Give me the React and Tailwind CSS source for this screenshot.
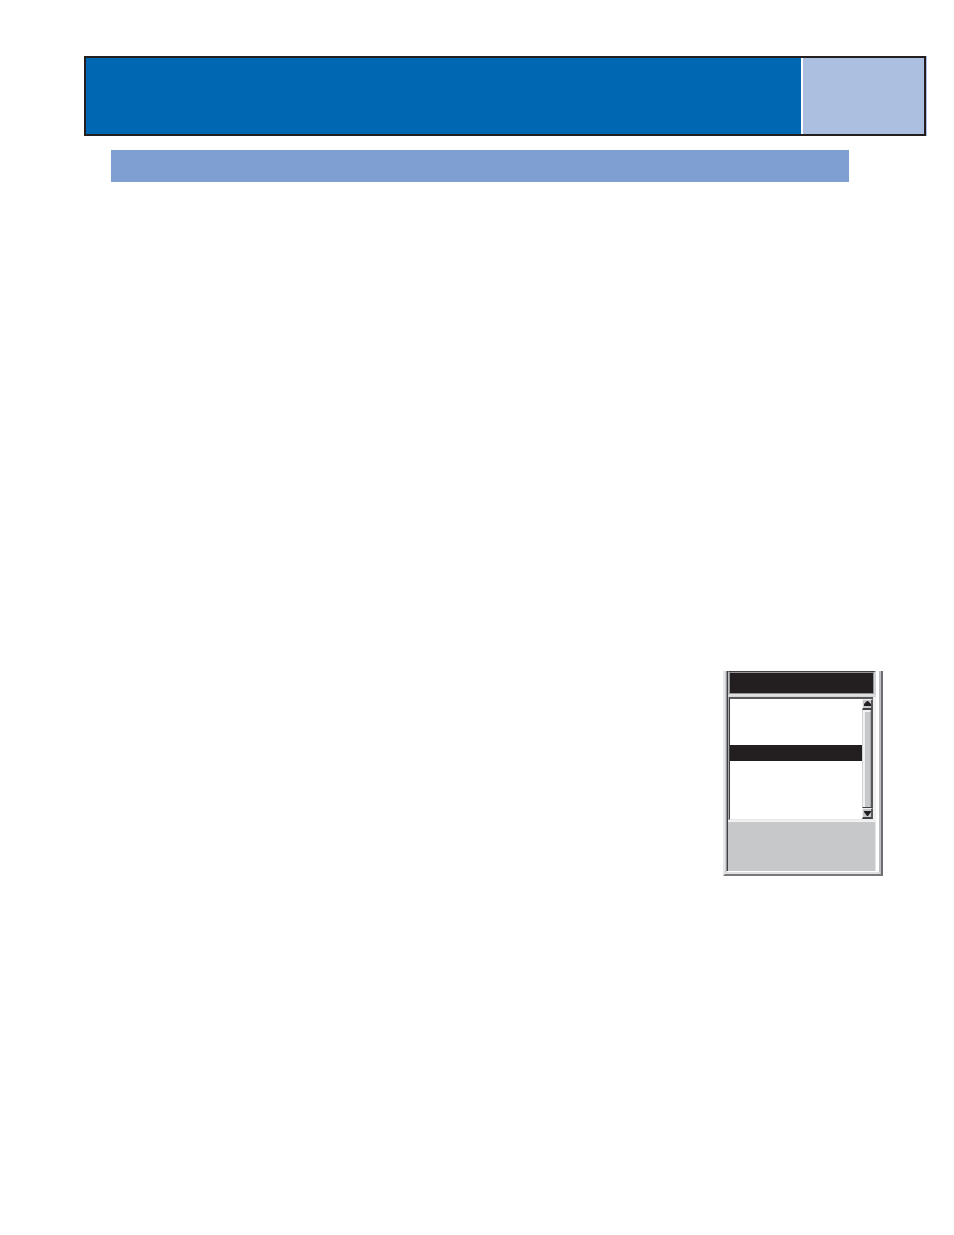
import React from 'react';

function PageHeader() {
  return (
    <header className="ml-[84px] mr-7">
      <div className="flex h-20 border-2 border-[#231f20] bg-[#0068b3] shadow-[1px_0_0_#adbfe1]">
        <div className="flex-1"></div>
        <div className="w-[123px] border-l-2 border-white bg-[#adbfe1]"></div>
      </div>
      <div className="mt-[14px] ml-[27px] mr-[77px] h-8 bg-[#7f9fd3]"></div>
    </header>
  );
}

function ScrollButton({ label, points }) {
  return (
    <button
      type="button"
      aria-label={label}
      className="flex h-[11px] w-full items-center justify-center border-t border-l border-r-2 border-b-2 border-t-[#f1f1f1] border-l-[#f1f1f1] border-r-[#58595b] border-b-[#414042] bg-[#c7c8ca]"
    >
      <svg className="h-[6px] w-[7px]" viewBox="0 0 7 6">
        <polygon points={points} fill="#231f20" />
      </svg>
    </button>
  );
}

function ScrollBar() {
  return (
    <div className="flex w-[11px] flex-col">
      <ScrollButton label="Scroll up" points="3,0 4,0 7,3 7,5 0,5 0,3" />
      <div className="flex flex-1 flex-col border-l border-r-2 border-b border-l-[#d1d3d4] border-r-[#58595b] border-b-[#414042]">
        <div className="flex-1 border-t-2 border-l-2 border-r border-[#f1f1f1] border-r-[#a7a9ac] bg-[#c7c8ca]"></div>
      </div>
      <ScrollButton label="Scroll down" points="0,1 7,1 7,2 4,6 3,6 0,2" />
    </div>
  );
}

function ListPanel() {
  return (
    <section className="w-40 border-l-2 border-r-2 border-b-2 border-l-[#e6e7e8] border-r-[#6d6e71] border-b-[#77787b]">
      <div className="border-l border-r-2 border-b-2 border-l-[#d1d3d4] border-r-[#bcbec0] border-b-[#e0e0e1] pr-[3px]">
        <div className="border-l border-b border-l-[#939598] border-b-white">
          <div className="border-l border-[#414042]">
            {/* title bar */}
            <div className="border-t border-l border-r-2 border-b-2 border-t-[#414042] border-l-[#bcbec0] border-r-[#d1d3d4] border-b-[#e0e0e1]">
              <div className="h-[22px] border border-[#939598] bg-[#231f20]"></div>
            </div>
            <div className="h-px bg-[#d1d3d4]"></div>

            {/* list with its scroll bar */}
            <div className="border-l border-r-[3px] border-l-[#a7a9ac] border-r-[#f1f1f1]">
              <div className="flex h-[123px] border-t-2 border-l border-b border-t-[#58595b] border-l-[#414042] border-b-[#e6e7e8] bg-white">
                <ul className="flex-1 pt-[46px]">
                  <li className="h-4 bg-[#231f20]"></li>
                </ul>
                <ScrollBar />
              </div>
            </div>

            <div className="h-[51px] border-t-2 border-r border-t-[#f1f1f1] border-r-[#e6e7e8] bg-[#c7c8ca]"></div>
          </div>
        </div>
      </div>
    </section>
  );
}

function App() {
  return (
    <div className="min-h-screen bg-white pt-14">
      <PageHeader />
      <main className="mt-[489px] mr-[71px] flex justify-end">
        <ListPanel />
      </main>
    </div>
  );
}

export default App;
